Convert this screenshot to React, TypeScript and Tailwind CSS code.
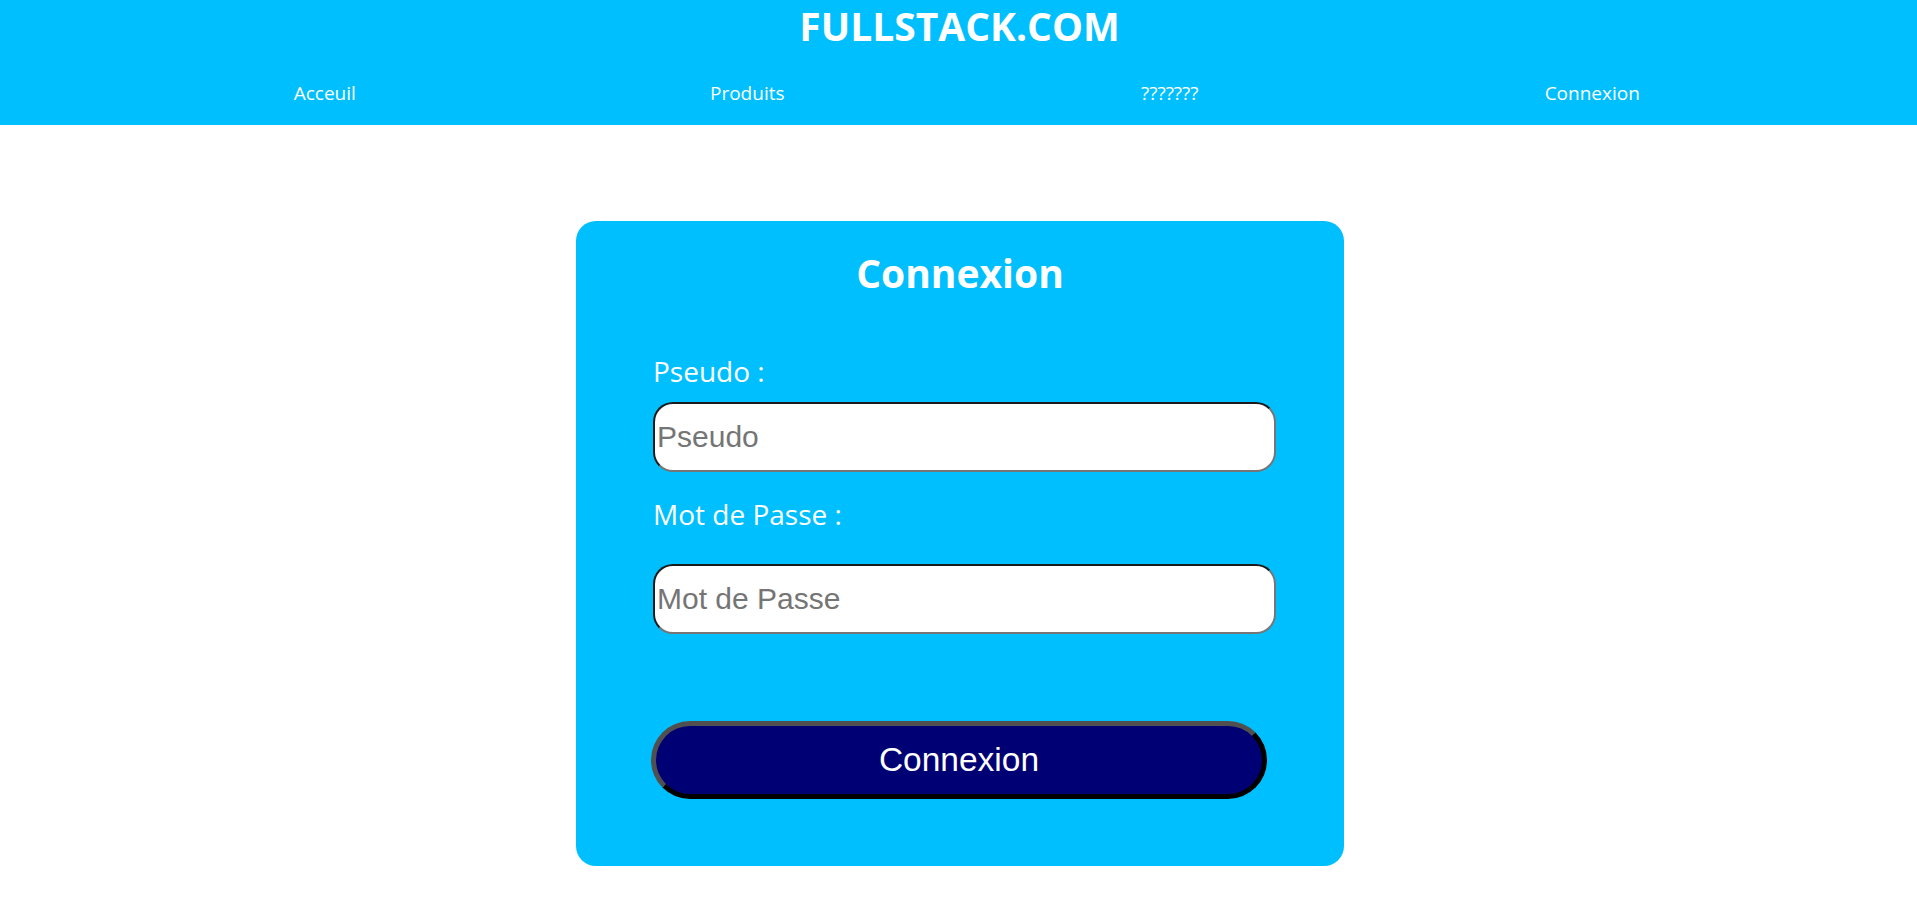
import React from "react";

export default function App() {
  const sans = { fontFamily: '"Open Sans", "Noto Sans", sans-serif' };
  const arial = { fontFamily: '"Liberation Sans", Arial, sans-serif' };
  return (
    <div className="min-h-[907px] w-full bg-white" style={sans}>
      <header className="h-[125px] w-full bg-[#00bfff] pt-[6px] text-white">
        <h1 className="pl-[2px] text-center text-[39px] font-bold leading-[39px]">FULLSTACK.COM</h1>
        <nav className="mx-auto mt-[39px] grid w-[1690px] grid-cols-4 text-center text-[19px] leading-[19px]">
          <a href="#">Acceuil</a>
          <a href="#">Produits</a>
          <a href="#">???????</a>
          <a href="#">Connexion</a>
        </nav>
      </header>
      <main className="pt-[96px]">
        <div className="ml-[576px] flex w-[768px] flex-col rounded-[20px] bg-[#00bfff] pb-[67px] pt-[32px] text-white">
          <h2 className="text-center text-[39px] font-bold leading-[39px]">Connexion</h2>
          <form className="ml-[77px] mt-[65px] flex flex-col items-start" onSubmit={(e) => e.preventDefault()}>
            <label className="text-[28px] leading-[28px]">Pseudo :</label>
            <input
              type="text"
              placeholder="Pseudo"
              className="mt-[17px] h-[70px] w-[623px] rounded-[20px] border-2 border-b-[#767676] border-l-[#1b1b1b] border-r-[#767676] border-t-[#1b1b1b] bg-white px-[2px] text-[30px] text-black outline-none placeholder:text-[#757575]"
              style={arial}
            />
            <label className="mt-[28px] text-[28px] leading-[28px]">Mot de Passe :</label>
            <input
              type="password"
              placeholder="Mot de Passe"
              className="mt-[36px] h-[70px] w-[623px] rounded-[20px] border-2 border-b-[#767676] border-l-[#1b1b1b] border-r-[#767676] border-t-[#1b1b1b] bg-white px-[2px] text-[30px] text-black outline-none placeholder:text-[#757575]"
              style={arial}
            />
            <button
              type="submit"
              className="-ml-[2px] mt-[87px] flex h-[78px] w-[616px] items-center justify-center rounded-full border-[5px] border-b-black border-l-[#505050] border-r-black border-t-[#505050] bg-[#000075] text-[33.5px] text-white"
              style={arial}
            >
              Connexion
            </button>
          </form>
        </div>
      </main>
    </div>
  );
}
